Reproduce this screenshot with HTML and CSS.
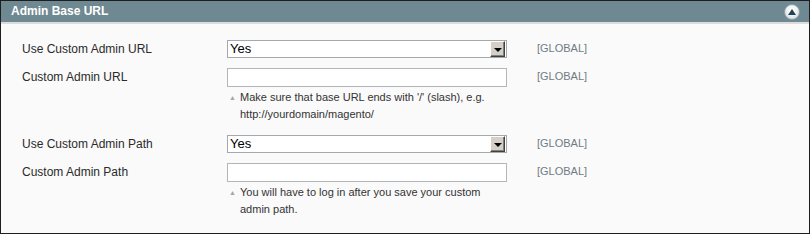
FILE: index.html
```html
<!DOCTYPE html>
<html>
<head>
<meta charset="utf-8">
<link rel="stylesheet" href="styles.css">
</head>
<body>
<div class="panel">
  <div class="panel-head">
    <span class="panel-title">Admin Base URL</span>
    <span class="collapse"><span class="collapse-tri"></span></span>
  </div>
  <div class="panel-body">
    <div class="row r1">
      <div class="label">Use Custom Admin URL</div>
      <div class="value">
        <div class="select"><span class="select-text">Yes</span><span class="select-btn"><span class="tri"></span></span></div>
      </div>
      <div class="scope">[GLOBAL]</div>
    </div>
    <div class="row r2">
      <div class="label">Custom Admin URL</div>
      <div class="value">
        <div class="input"></div>
        <div class="note"><span class="note-tri">▲</span><span class="note-text">Make sure that base URL ends with '/' (slash), e.g. http://yourdomain/magento/</span></div>
      </div>
      <div class="scope">[GLOBAL]</div>
    </div>
    <div class="row r3">
      <div class="label">Use Custom Admin Path</div>
      <div class="value">
        <div class="select"><span class="select-text">Yes</span><span class="select-btn"><span class="tri"></span></span></div>
      </div>
      <div class="scope">[GLOBAL]</div>
    </div>
    <div class="row r4">
      <div class="label">Custom Admin Path</div>
      <div class="value">
        <div class="input"></div>
        <div class="note"><span class="note-tri">▲</span><span class="note-text">You will have to log in after you save your custom admin path.</span></div>
      </div>
      <div class="scope">[GLOBAL]</div>
    </div>
  </div>
</div>
</body>
</html>
```

FILE: styles.css
```css
html, body {
  margin: 0;
  padding: 0;
  background: #fafafa;
}
.panel {
  box-sizing: border-box;
  width: 810px;
  height: 234px;
  border: 1px solid #1e1e1e;
  background: #fafafa;
  font-family: "Liberation Sans", Arial, sans-serif;
  font-size: 12px;
  color: #2a2a2a;
}
.panel-head {
  height: 21px;
  background: #6f8992;
  border-bottom: 2px solid #dcdcdc;
  display: flex;
  align-items: center;
  justify-content: space-between;
  padding: 0 9px 0 10px;
}
.panel-title {
  color: #ffffff;
  font-weight: bold;
  font-size: 12px;
  line-height: 21px;
}
.collapse {
  box-sizing: border-box;
  width: 16px;
  height: 16px;
  border-radius: 50%;
  border: 1px solid #8fa1a7;
  background: radial-gradient(circle at 50% 40%, #ffffff 0%, #eef1f2 45%, #c3cdd0 100%);
  display: flex;
  align-items: center;
  justify-content: center;
  margin-top: 1px;
}
.collapse-tri {
  width: 0;
  height: 0;
  border-left: 4px solid transparent;
  border-right: 4px solid transparent;
  border-bottom: 6px solid #1f4350;
  margin-top: -1px;
}
.panel-body {
  padding: 16px 0 0 21px;
}
.row {
  display: grid;
  grid-template-columns: 205px 280px 30px auto;
  align-items: start;
}
.r1, .r3 { margin-bottom: 10px; }
.r2 { margin-bottom: 12px; }
.label {
  line-height: 16px;
  padding-top: 1px;
}
.scope {
  grid-column: 4;
  font-size: 11px;
  color: #6f7c83;
  line-height: 14px;
  padding-top: 1px;
}
.value {
  display: flex;
  flex-direction: column;
}
.select {
  box-sizing: border-box;
  height: 18px;
  border: 1px solid #a5a9ad;
  background: #ffffff;
  display: flex;
  align-items: stretch;
  justify-content: space-between;
}
.select-text {
  font-size: 13px;
  color: #000;
  line-height: 16px;
  padding-left: 2px;
}
.select-btn {
  box-sizing: border-box;
  width: 15px;
  height: 16px;
  margin-right: 1px;
  background: #d4d0c8;
  border-top: 1px solid #ffffff;
  border-left: 1px solid #ffffff;
  border-right: 1px solid #404040;
  border-bottom: 1px solid #404040;
  box-shadow: inset -1px -1px 0 #808080;
  display: flex;
  align-items: center;
  justify-content: center;
}
.tri {
  width: 0;
  height: 0;
  border-left: 4px solid transparent;
  border-right: 4px solid transparent;
  border-top: 4px solid #000;
  margin-top: 1px;
}
.input {
  box-sizing: border-box;
  height: 19px;
  border: 1px solid #b3b6b9;
  background: #ffffff;
}
.note {
  display: flex;
  margin-top: 2px;
  font-size: 11px;
  line-height: 17px;
  color: #333;
}
.note-tri {
  font-size: 7px;
  color: #a6a6a6;
  width: 13px;
  padding-left: 2px;
  box-sizing: border-box;
  line-height: 17px;
  flex-shrink: 0;
}
.note-text {
  width: 255px;
}
```
